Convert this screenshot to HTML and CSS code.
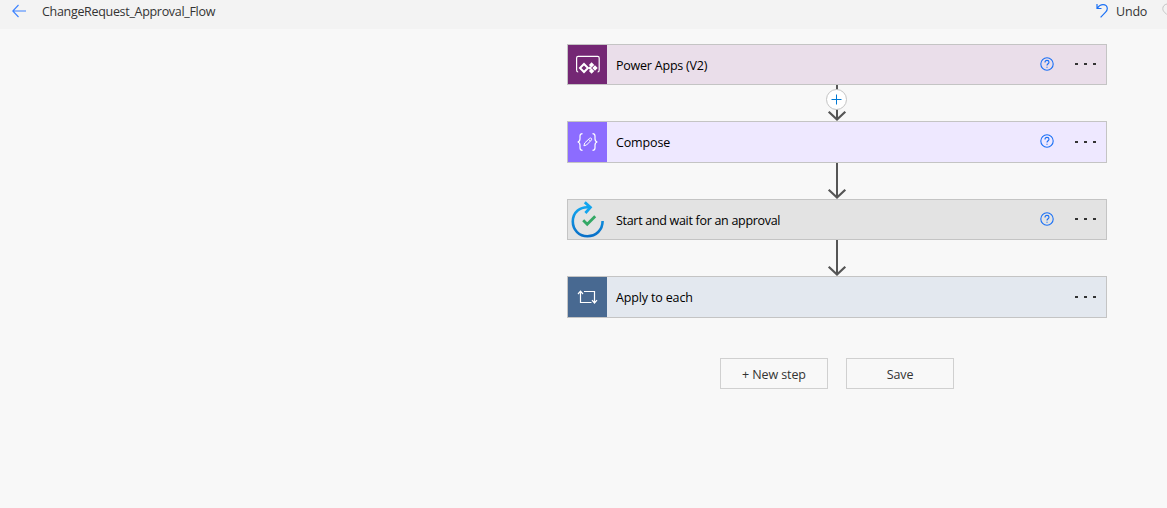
FILE: index.html
```html
<!DOCTYPE html>
<html lang="en">
  <head>
    <meta charset="UTF-8" />
    <meta name="viewport" content="width=device-width, initial-scale=1.0" />
    <title>ChangeRequest_Approval_Flow</title>
    <link rel="stylesheet" href="styles.css">
  </head>
  <body>
    <header class="top-bar">
      <svg class="back" width="15" height="14" viewBox="0 0 15 14">
        <path d="M6.5 1 L0.8 7 L6.5 13 M0.8 7 H14" />
      </svg>
      <span class="flow-name">ChangeRequest_Approval_Flow</span>
      <svg class="undo" width="12" height="16" viewBox="0 0 12 16">
        <path d="M1 1 V5.5 H5.5 M1.2 5.3 C3 2.6 5 1.6 7 1.6 C9.6 1.6 11.3 3.4 11.3 5.6 C11.3 7.3 10.5 8.3 9.6 9.2 L4.6 14.3" />
      </svg>
      <span class="undo-text">Undo</span>
      <svg class="redo" width="5" height="16" viewBox="0 0 5 16">
        <path d="M5 1 C2.4 1.4 0.8 3.3 0.8 5.6 C0.8 7.3 1.6 8.3 2.5 9.2 L5 11.7" />
      </svg>
    </header>

    <main class="flow">
      <div class="card power-apps">
        <div class="icon">
          <svg width="39" height="39" viewBox="0 0 39 39">
            <path class="line" d="M10.2 27 C9 27 8.6 26.4 8.6 25 V13 Q8.6 11.4 10.2 11.4 H29.6 Q31.2 11.4 31.2 13 V25 C31.2 26.4 30.8 27 29.6 27" />
            <path class="diamond" d="M16 19 L20 23 L16 27 L12 23 Z" />
            <path class="fill" d="M23.6 17.2 L26.3 19.9 L23.6 22.6 L20.9 19.9 Z M27 20.3 L29.7 23 L27 25.7 L24.3 23 Z M23.6 23.4 L26.3 26.1 L23.6 28.8 L20.9 26.1 Z M22 21.2 L23.8 23 L22 24.8 L20.2 23 Z" />
          </svg>
        </div>
        <span class="title">Power Apps (V2)</span>
        <svg class="help" width="14" height="14" viewBox="0 0 14 14">
          <circle cx="7" cy="7" r="6.2" />
          <path d="M5 5.4 C5 4.1 5.9 3.4 7 3.4 C8.2 3.4 9 4.2 9 5.2 C9 6.7 7 6.8 7 8.6 M7 9.7 V10.8" />
        </svg>
        <div class="dots"><i></i><i></i><i></i></div>
      </div>

      <div class="arrow">
        <svg width="20" height="36" viewBox="0 0 20 36">
          <path class="stem" d="M10 0 V35" />
          <path class="head" d="M1.7 26.8 L10 34.5 L18.3 26.8" />
        </svg>
        <div class="add">
          <svg width="11" height="11" viewBox="0 0 11 11">
            <path d="M5.5 0.5 V10.5 M0.5 5.5 H10.5" />
          </svg>
        </div>
      </div>

      <div class="card compose tall">
        <div class="icon">
          <svg width="39" height="40" viewBox="0 0 39 40">
            <path class="line" d="M14.5 11.6 C12.3 11.6 12 12.6 12 14 V16.8 C12 18.6 11.5 19.7 9.7 20 C11.5 20.3 12 21.4 12 23.2 V26 C12 27.4 12.3 28.4 14.5 28.4" />
            <path class="line" d="M24.5 11.6 C26.7 11.6 27 12.6 27 14 V16.8 C27 18.6 27.5 19.7 29.3 20 C27.5 20.3 27 21.4 27 23.2 V26 C27 27.4 26.7 28.4 24.5 28.4" />
            <path class="pencil" d="M15.9 23.8 L16.7 21 L21.5 16.4 Q22.7 15.6 23.4 16.4 Q24.1 17.2 23.2 18.3 L18.5 23 Z M20.6 17.3 L22.4 19.1" />
          </svg>
        </div>
        <span class="title">Compose</span>
        <svg class="help" width="14" height="14" viewBox="0 0 14 14">
          <circle cx="7" cy="7" r="6.2" />
          <path d="M5 5.4 C5 4.1 5.9 3.4 7 3.4 C8.2 3.4 9 4.2 9 5.2 C9 6.7 7 6.8 7 8.6 M7 9.7 V10.8" />
        </svg>
        <div class="dots"><i></i><i></i><i></i></div>
      </div>

      <div class="arrow">
        <svg width="20" height="36" viewBox="0 0 20 36">
          <path class="stem" d="M10 0 V35" />
          <path class="head" d="M1.7 26.8 L10 34.5 L18.3 26.8" />
        </svg>
      </div>

      <div class="card approval">
        <div class="icon">
          <svg width="39" height="39" viewBox="0 0 39 39">
            <defs>
              <linearGradient id="ring" x1="0" y1="0" x2="0" y2="1">
                <stop offset="0" stop-color="#12a5ee" />
                <stop offset="1" stop-color="#0a70c8" />
              </linearGradient>
            </defs>
            <path class="ring" d="M22 7.4 C12 6 4.8 12.6 4.8 21.6 C4.8 30 11.2 36.2 19.4 36.2 C28 36.2 34.6 30 34.6 21" />
            <path class="tip" d="M16.8 2.2 L22.4 7.4 L17.4 13" />
            <path class="check" d="M15.2 20.2 L19.2 24.2 L27.2 16.2" />
          </svg>
        </div>
        <span class="title">Start and wait for an approval</span>
        <svg class="help" width="14" height="14" viewBox="0 0 14 14">
          <circle cx="7" cy="7" r="6.2" />
          <path d="M5 5.4 C5 4.1 5.9 3.4 7 3.4 C8.2 3.4 9 4.2 9 5.2 C9 6.7 7 6.8 7 8.6 M7 9.7 V10.8" />
        </svg>
        <div class="dots"><i></i><i></i><i></i></div>
      </div>

      <div class="arrow">
        <svg width="20" height="36" viewBox="0 0 20 36">
          <path class="stem" d="M10 0 V35" />
          <path class="head" d="M1.7 26.8 L10 34.5 L18.3 26.8" />
        </svg>
      </div>

      <div class="card each tall">
        <div class="icon">
          <svg width="39" height="40" viewBox="0 0 39 40">
            <path class="line" d="M12.5 14.5 V25.5 H23.5 M10 17 L12.5 14.2 L15 17 M16 14.5 H26.5 V25.5 M24 23.2 L26.5 26 L29 23.2" />
          </svg>
        </div>
        <span class="title">Apply to each</span>
        <div class="dots"><i></i><i></i><i></i></div>
      </div>

      <div class="buttons">
        <button type="button" class="new-step">+ New step</button>
        <button type="button" class="save">Save</button>
      </div>
    </main>
  </body>
</html>
```

FILE: styles.css
```css
body {
  font-family: "Open Sans", "Noto Sans", sans-serif;
  font-size: 12.5px;
  margin: 0;
  height: 508px;
  overflow: hidden;
  background-color: #f8f8f8;
  color: #333;
}

svg {
  display: block;
  flex: none;
  fill: none;
}

.top-bar {
  display: flex;
  height: 29px;
  box-sizing: border-box;
  padding-left: 12px;
  background-color: #f3f3f3;
  line-height: 23px;
  white-space: nowrap;
}

.back {
  margin-top: 4px;
  stroke: #3c82ff;
  stroke-width: 1.1;
}

.flow-name {
  width: 1053px;
  margin-left: 15px;
  letter-spacing: -0.31px;
}

.undo {
  margin: 3px 0 0 1px;
  stroke: #1a70f5;
  stroke-width: 1.2;
}

.undo-text {
  width: 39px;
  margin-left: 8px;
  letter-spacing: -0.2px;
}

.redo {
  margin: 3px 0 0 7px;
  stroke: #c4c4c4;
}

.flow {
  width: 540px;
  margin: 15px 0 0 567px;
}

.card {
  display: flex;
  align-items: center;
  box-sizing: border-box;
  height: 41px;
  border: 1px solid #c4c4c4;
  color: #000;
}

.tall {
  height: 42px;
}

.icon {
  width: 39px;
  height: 100%;
  overflow: hidden;
}

.title {
  flex: 1;
  margin: 2px 0 0 9px;
  letter-spacing: -0.22px;
}

.tall .title {
  margin-top: 0;
  letter-spacing: -0.15px;
}

.approval .title {
  letter-spacing: -0.3px;
}

.help {
  margin: 0 21px 2px 0;
  stroke: #1a70f5;
  stroke-width: 1.1;
}

.dots {
  display: flex;
  gap: 6px;
  margin: 0 10px 1px 0;
}

.dots i {
  width: 3px;
  height: 2px;
  background-color: #333;
}

.line {
  stroke: #fff;
  stroke-width: 1.2;
}

.power-apps {
  background-color: #eadeea;
}

.power-apps .icon {
  background-color: #742774;
}

.diamond {
  stroke: #fff;
  stroke-width: 2;
}

.fill {
  fill: #fff;
}

.compose {
  background-color: #eee8ff;
}

.compose .icon {
  background-color: #8c6cff;
}

.pencil {
  stroke: #fff;
}

.approval {
  background-color: #e3e3e3;
}

.ring {
  stroke: url(#ring);
  stroke-width: 2.6;
}

.tip {
  stroke: #12a5ee;
  stroke-width: 2.8;
}

.check {
  stroke: #33a865;
  stroke-width: 2.8;
}

.each {
  background-color: #e3e8ef;
}

.each .icon {
  background-color: #486991;
}

.arrow {
  position: relative;
  display: flex;
  justify-content: center;
  height: 36px;
}

.stem,
.head {
  stroke: #555;
  stroke-width: 2;
}

.head {
  stroke-width: 2.2;
}

.add {
  position: absolute;
  top: 4px;
  left: 259px;
  display: flex;
  align-items: center;
  justify-content: center;
  box-sizing: border-box;
  width: 21px;
  height: 21px;
  border: 1px solid #c4c4c4;
  border-radius: 50%;
  background-color: #fff;
}

.add svg {
  stroke: #0078d4;
}

.buttons {
  display: flex;
  justify-content: center;
  gap: 18px;
  margin-top: 40px;
}

button {
  width: 108px;
  height: 31px;
  padding: 2px 0 0;
  border: 1px solid #d0d0d0;
  background-color: #f8f8f8;
  color: #333;
  font: inherit;
  letter-spacing: -0.1px;
}
```
